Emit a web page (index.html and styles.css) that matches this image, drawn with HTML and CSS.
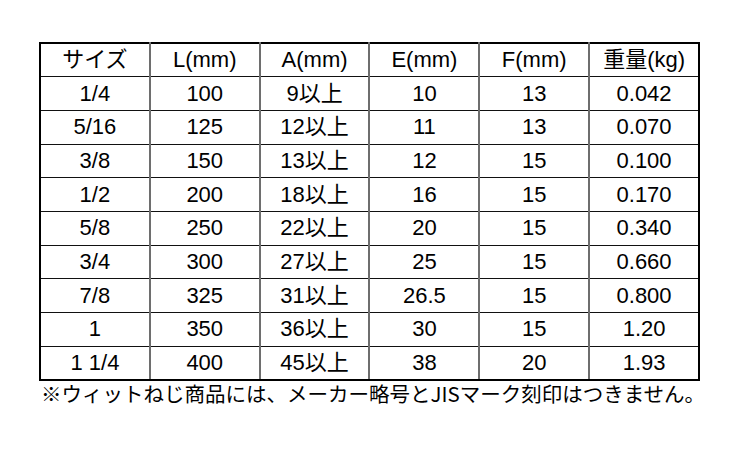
FILE: index.html
```html
<!DOCTYPE html>
<html lang="ja">
<head>
<meta charset="utf-8">
<link rel="stylesheet" href="styles.css">
</head>
<body>
<div class="wrap">
<table class="spec">
<thead>
<tr><th>サイズ</th><th>L(mm)</th><th>A(mm)</th><th>E(mm)</th><th>F(mm)</th><th>重量(kg)</th></tr>
</thead>
<tbody>
<tr><td>1/4</td><td>100</td><td>9以上</td><td>10</td><td>13</td><td>0.042</td></tr>
<tr><td>5/16</td><td>125</td><td>12以上</td><td>11</td><td>13</td><td>0.070</td></tr>
<tr><td>3/8</td><td>150</td><td>13以上</td><td>12</td><td>15</td><td>0.100</td></tr>
<tr><td>1/2</td><td>200</td><td>18以上</td><td>16</td><td>15</td><td>0.170</td></tr>
<tr><td>5/8</td><td>250</td><td>22以上</td><td>20</td><td>15</td><td>0.340</td></tr>
<tr><td>3/4</td><td>300</td><td>27以上</td><td>25</td><td>15</td><td>0.660</td></tr>
<tr><td>7/8</td><td>325</td><td>31以上</td><td>26.5</td><td>15</td><td>0.800</td></tr>
<tr><td>1</td><td>350</td><td>36以上</td><td>30</td><td>15</td><td>1.20</td></tr>
<tr><td>1 1/4</td><td>400</td><td>45以上</td><td>38</td><td>20</td><td>1.93</td></tr>
</tbody>
</table>
<p class="note">※ウィットねじ商品には、メーカー略号とJISマーク刻印はつきません。</p>
</div>
</body>
</html>
```

FILE: styles.css
```css
html, body {
  margin: 0;
  padding: 0;
  background: #ffffff;
}

.wrap {
  padding: 42px 0 0 39px;
  width: 680px;
}

.spec {
  border-collapse: collapse;
  table-layout: fixed;
  width: 661px;
  border: 2px solid #000;
  font-family: "Liberation Sans", "Noto Sans CJK JP", sans-serif;
  font-size: 22px;
  color: #000;
}

.spec tr {
  height: 33.7px;
}

.spec th,
.spec td {
  font-weight: normal;
  text-align: center;
  vertical-align: middle;
  padding: 0;
  border-top: 1px solid #111;
  border-bottom: 1px solid #111;
  border-left: 2px solid #6e6e6e;
  border-right: 2px solid #6e6e6e;
  line-height: 24px;
}

.spec th:first-child,
.spec td:first-child {
  border-left: 2px solid #000;
}

.spec th:last-child,
.spec td:last-child {
  border-right: 2px solid #000;
}

.spec thead th {
  border-top: 2px solid #000;
}

.spec tbody tr:last-child td {
  border-bottom: 2px solid #000;
}

.note {
  margin: 0;
  padding-left: 2px;
  font-family: "Noto Sans CJK JP", sans-serif;
  font-size: 20.5px;
  line-height: 24px;
  color: #000;
  white-space: nowrap;
}
```
